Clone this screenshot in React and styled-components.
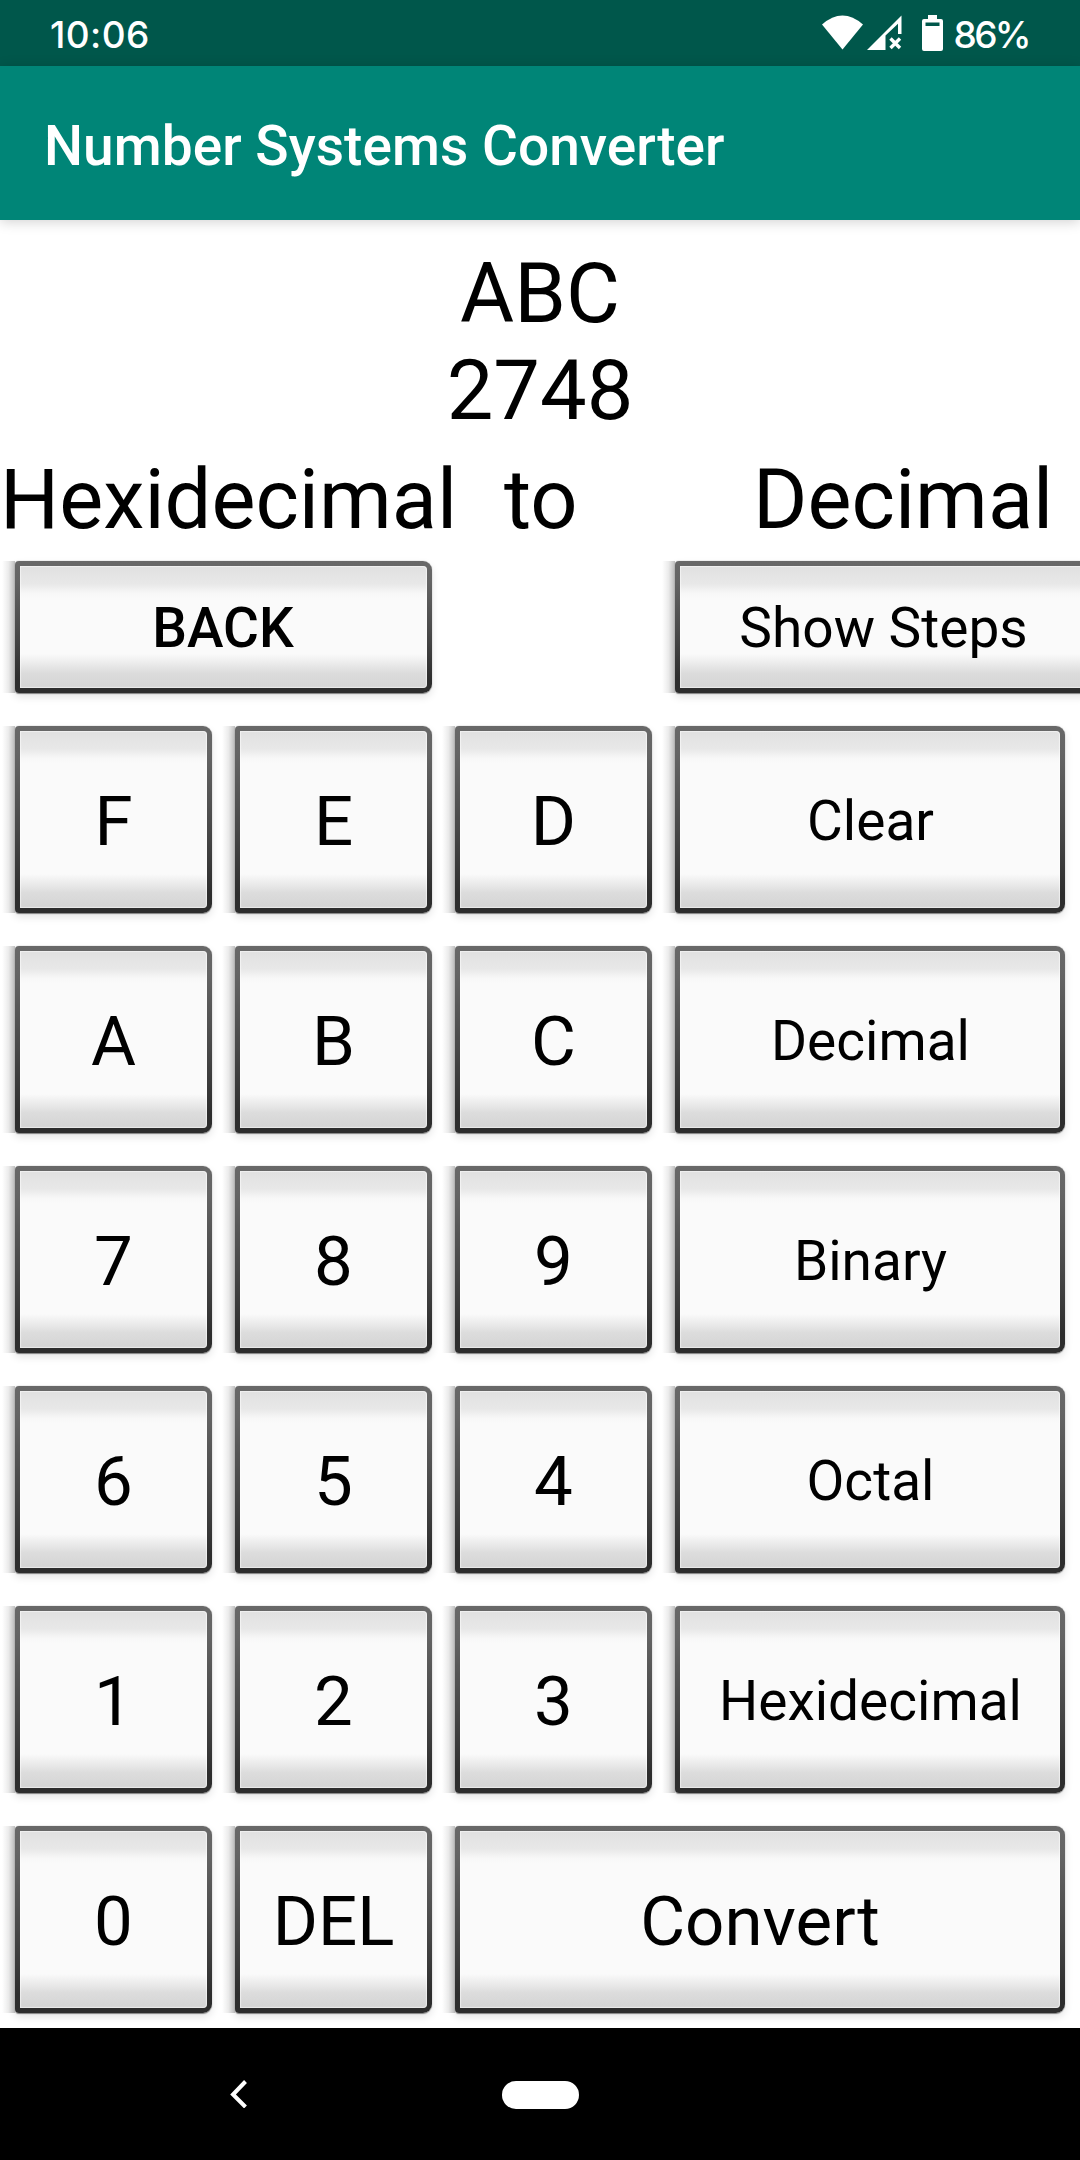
import React from "react";
import styled, { createGlobalStyle } from "styled-components";

const GlobalStyle = createGlobalStyle`
  * { box-sizing: border-box; }
  body { margin: 0; background: #fff; }
`;

const Screen = styled.div`
  width: 1080px;
  height: 2160px;
  display: flex;
  flex-direction: column;
  overflow: hidden;
  background: #fff;
  color: #000;
  font-family: Roboto, "Liberation Sans", sans-serif;
`;

const StatusBar = styled.header`
  flex: none;
  height: 66px;
  padding: 0 51px 0 50px;
  display: flex;
  align-items: center;
  justify-content: space-between;
  background: #00574b;
  color: #fff;
`;

const StatusText = styled.span`
  font: 500 37px/66px Inter, sans-serif;
  letter-spacing: ${(p) => p.$spacing}px;
  padding-top: 3px;
`;

const StatusIcons = styled.div`
  display: flex;
  align-items: center;
`;

const Glyph = styled.svg`
  display: block;
  flex: none;
  margin-right: ${(p) => p.$gap}px;
`;

const AppBar = styled.div`
  flex: none;
  height: 154px;
  padding: 6px 44px 0;
  display: flex;
  align-items: center;
  background: #008577;
  box-shadow: 0 2px 12px rgba(0, 0, 0, 0.18);
`;

const Title = styled.h1`
  margin: 0;
  color: #fff;
  font-size: 55px;
  font-weight: 500;
  line-height: 64px;
  letter-spacing: 0.05px;
  white-space: nowrap;
`;

const Display = styled.section`
  flex: none;
  height: 341px;
  padding-top: 26px;
  font-size: 83px;
  line-height: 96.5px;
`;

const Value = styled.div`
  text-align: center;
`;

const Conversion = styled.div`
  display: grid;
  grid-template-columns: 504px 249px auto;
  margin-top: 13px;
  white-space: nowrap;
`;

const Keypad = styled.main`
  flex: none;
  height: 1467px;
  display: grid;
  grid-template-columns: 197px 197px 197px 390px;
  grid-template-rows: 132px repeat(6, 187px);
  gap: 33px 23px;
  padding-left: 15px;
`;

const Key = styled.button`
  position: relative;
  grid-column: ${(p) => p.$col || "auto"};
  width: ${(p) => p.$width || "auto"};
  margin: 0;
  padding: ${(p) => p.$drop || 0}px ${(p) => (p.$strong ? 1 : 0)}px 0
    ${(p) => (p.$small && !p.$strong ? 1 : 0)}px;
  border: 5px solid transparent;
  border-radius: 4px 9px 9px 4px;
  background:
    linear-gradient(
        to bottom,
        #e0e0e0 0,
        #e8e8e8 18px,
        #f7f7f7 27px,
        #fafafa 33px,
        #fafafa calc(100% - 34px),
        #dcdcdc calc(100% - 15px),
        #d4d4d4 100%
      )
      padding-box,
    linear-gradient(to bottom, #686868 0, #646464 15%, #484848 55%, #2d2d2d 90%)
      border-box;
  box-shadow:
    0 0.5px 1px 0 rgba(60, 60, 60, 0.6),
    0 4px 8px rgba(0, 0, 0, 0.11),
    inset 0 0 1px 1px rgba(255, 255, 255, 0.55);
  color: #000;
  font-family: inherit;
  font-size: ${(p) => (p.$small ? 55 : 69)}px;
  font-weight: ${(p) => (p.$strong ? 500 : 400)};
  line-height: 1.172;
  white-space: nowrap;

  &::before {
    content: "";
    position: absolute;
    top: -5px;
    bottom: -5px;
    left: -18px;
    width: 13px;
    background: linear-gradient(to right, rgba(0, 0, 0, 0), rgba(0, 0, 0, 0.08) 50%, rgba(0, 0, 0, 0.24));
  }
`;

const NavBar = styled.nav`
  flex: none;
  height: 132px;
  padding-left: 230px;
  display: flex;
  align-items: center;
  background: #000;
`;

const HomePill = styled.div`
  width: 77px;
  height: 28px;
  margin: 1px 0 0 254px;
  border-radius: 14px;
  background: #fff;
`;

const rows = [
  ["F", "E", "D", "Clear"],
  ["A", "B", "C", "Decimal"],
  ["7", "8", "9", "Binary"],
  ["6", "5", "4", "Octal"],
  ["1", "2", "3", "Hexidecimal"],
];

export default function App() {
  return (
    <>
      <GlobalStyle />
      <Screen>
        <StatusBar>
          <StatusText $spacing={0.4}>10:06</StatusText>
          <StatusIcons>
            <Glyph width="41" height="36" viewBox="0 0 41 36" $gap={3.5}>
              <path d="M0 9.5Q20.5-8.5 41 9.5L20.5 34.5Z" fill="#fff" />
            </Glyph>
            <Glyph width="35" height="36" viewBox="0 0 35 36" $gap={20}>
              <path d="M0 35L34.5 0.5V19h-3.5V8.8L18.5 20.5V35Z" fill="#fff" />
              <path d="M23.5 23.500l9.500 9.500M33 23.500l-9.500 9.500" stroke="#fff" strokeWidth="3.400" />
            </Glyph>
            <Glyph width="21" height="36" viewBox="0 0 21 36" $gap={10.5}>
              <path
                d="M6 0h9v4h4a2 2 0 0 1 2 2v28a2 2 0 0 1-2 2H2a2 2 0 0 1-2-2V6a2 2 0 0 1 2-2h4ZM3.500 7.500v3.500h14V7.500Z"
                fill="#fff"
                fillRule="evenodd"
              />
            </Glyph>
            <StatusText $spacing={-2.6}>86%</StatusText>
          </StatusIcons>
        </StatusBar>
        <AppBar>
          <Title>Number Systems Converter</Title>
        </AppBar>
        <Display>
          <Value>ABC</Value>
          <Value>2748</Value>
          <Conversion>
            <span>Hexidecimal</span>
            <span>to</span>
            <span>Decimal</span>
          </Conversion>
        </Display>
        <Keypad>
          <Key $col="1 / 3" $small $strong $drop={2}>BACK</Key>
          <Key $col="4" $small $width="416px" $drop={2}>Show Steps</Key>
          {rows.flat().map((label) => (
            <Key key={label} $small={label.length > 1} $drop={label.length > 1 ? 3 : 5}>
              {label}
            </Key>
          ))}
          <Key $drop={5}>0</Key>
          <Key $drop={5}>DEL</Key>
          <Key $col="3 / 5" $drop={5}>Convert</Key>
        </Keypad>
        <NavBar>
          <Glyph width="18" height="28" viewBox="0 0 18 28" $gap={0}>
            <path d="M15.500 1.500L3 14.500l12.500 12.500" fill="none" stroke="#fff" strokeWidth="4" />
          </Glyph>
          <HomePill />
        </NavBar>
      </Screen>
    </>
  );
}
